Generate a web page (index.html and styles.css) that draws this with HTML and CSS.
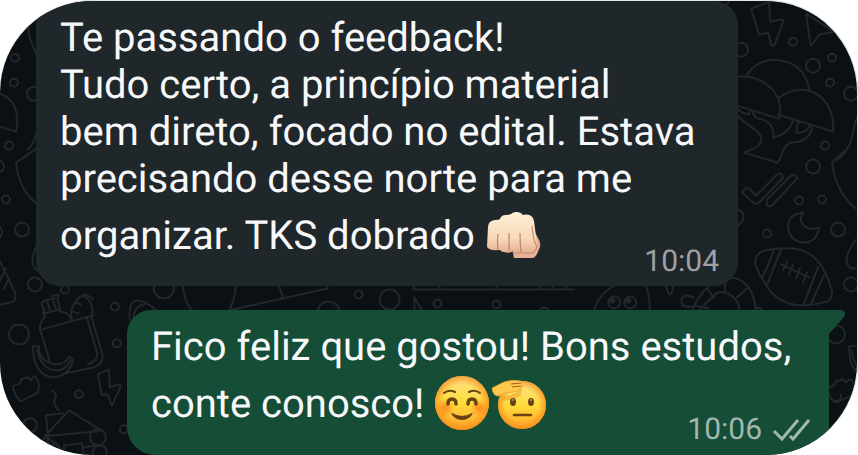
FILE: index.html
```html
<!DOCTYPE html>
<html lang="pt-BR">
<head>
<meta charset="utf-8">
<meta name="viewport" content="width=device-width, initial-scale=1">
<title>Conversa</title>
<link rel="stylesheet" href="styles.css">
</head>
<body>
<main class="chat">
  <svg class="wallpaper" viewBox="0 0 858 455" preserveAspectRatio="xMidYMid slice" aria-hidden="true">
    <!-- small bubbles -->
    <circle cx="15" cy="57" r="4"/><circle cx="14" cy="82" r="4"/><circle cx="34" cy="93" r="7"/><circle cx="9" cy="145" r="4"/>
    <circle cx="-2" cy="166" r="6"/><circle cx="6" cy="199" r="4"/><circle cx="22" cy="229" r="7"/><circle cx="35" cy="284" r="7"/>
    <circle cx="65" cy="289" r="4"/><circle cx="19" cy="334" r="10"/><circle cx="115" cy="306" r="4"/><circle cx="117" cy="343" r="4"/>
    <circle cx="79" cy="394" r="4"/><circle cx="30" cy="425" r="7"/><circle cx="124" cy="429" r="4"/><circle cx="164" cy="288" r="10"/>
    <circle cx="359" cy="294" r="4"/><circle cx="390" cy="299" r="10"/><circle cx="438" cy="303" r="4"/><circle cx="497" cy="304" r="4"/>
    <circle cx="545" cy="311" r="4"/><circle cx="329" cy="312" r="11"/><circle cx="742" cy="49" r="7"/><circle cx="794" cy="41" r="4"/>
    <circle cx="814" cy="65" r="7"/><circle cx="833" cy="57" r="4"/><circle cx="831" cy="82" r="4"/><circle cx="852" cy="93" r="7"/>
    <circle cx="826" cy="145" r="4"/><circle cx="814" cy="166" r="7"/><circle cx="800" cy="200" r="4"/><circle cx="823" cy="199" r="4"/>
    <circle cx="839" cy="229" r="7"/><circle cx="768" cy="233" r="4"/><circle cx="852" cy="284" r="7"/><circle cx="837" cy="334" r="9"/>
    <!-- left edge shapes -->
    <path d="M29 24C27 36 33 43 37 56M0 93C14 98 20 112 16 131L0 126M37 132Q34 142 28 149M38 147L16 162C18 182 27 196 38 204M37 245Q28 263 37 270M0 227Q4 231 0 237M0 261L15 292Q17 300 11 302L0 304M0 280L6 268M4 288L9 278"/>
    <!-- groceries and banana -->
    <path d="M42 304l3 9 15-4-2-9q-1-3-4-2l-9 2q-4 1-3 4M47 300l3 10M53 299l3 10M43 312l2 4q-6 7-5 13l10 32M59 309l1 2q8 0 12 9M42 329l51-14q-1-16-8-19-7-1-12 10-3 7-1 14M75 302l6 2M72 311l7 2M87 317l10 35q2 8-9 12M91 315l11 37q3 11-8 15L62 374"/>
    <path d="M33 346l6 0 0 5q5 13 18 13 8 0 12-7 3-1 4 3-4 17-22 17-18-4-18-31M37 349q4 19 18 21 10 1 16-10"/>
    <!-- briefcase, steam, lightning -->
    <path d="M13 386l7-3 1-4 7-2 3 3 3-4q3 0 5 9l-1 7-17 9q-4-2-8-13M52 390q6 5 3 9t4 11M98 374l11-5 1 18 9-3q4 1-3 12l-3 8q-2 3-3-5l-3-5-5 1z"/>
    <!-- small house on wheels -->
    <path d="M45 436l24-26 32 20-3 1-53 5 3-1-2-20 17-2M48 437v18M64 455v-10l18-2 2 12M84 447l14-2M55 442l7 8"/>
    <circle cx="98" cy="437" r="8"/><circle cx="46" cy="446" r="8"/><circle cx="100" cy="452" r="7"/>
    <!-- strip between messages -->
    <path d="M52 296l6-2q2 1 0 3M77 299q8-9 16 0M183 286q3 22 14 28h30q8-12 9-28M229 310l99-22v-4M279 284l4 13M130 320q-2-20 8-20 9 0 19 11M133 324q0-20 12-20M414 286v3h161M415 309v-12l9 16M440 286v3M497 286v3M540 286v3M553 286v3M567 286v3M594 312q6-20 23-28M647 286q5 14 3 28M667 286q4 16 7 0"/>
    <circle cx="615" cy="302" r="6"/><circle cx="631" cy="302" r="6"/><circle class="dot" cx="613" cy="300" r="3"/><circle class="dot" cx="629" cy="300" r="3"/>
    <!-- turtle -->
    <path d="M694 297q-10-5-12 3 0 8 10 6M692 312q14-34 40-35 22 2 25 34M698 312q10-11 20-20 16-2 22 14l-1 7M695 305l14 3M708 288l7 10M726 280v12M738 297l11-10M756 308q6-2 8 3"/>
    <!-- lightning -->
    <path d="M770 1l-18 7 8 26 9-2 3 12q2 3 4-1l8-22q1-3-3-2l-10 2zM807 13l28 18-15 3-7 10q-2 2-2-3zM725 4q4 0 5-4"/>
    <!-- trees -->
    <path d="M748 74q10-15 28-15 29 2 34 29M738 76c28-2 48 18 42 42l-42-13M780 97c27-20 57 0 54 34l-55-17M738 107q3 5 12 7l1-5M754 111q0 7 10 8 12 5 10 18 17-4 20-18M799 121l-2 11q10 1 14-7M813 126q-2 16-22 16-6 3-10 16l-3 4-33-10 12-5q12-10-4-20-13-9-14-12M858 117c-5 10-2 30-20 42"/>
    <!-- double tick -->
    <path d="M744 191q2-5 6-3l7 7 21-21q5-3 6 3l-23 24q-4 4-7 1l-10-9q-1-1 0-2M768 199l24-24q6-2 6 3l-25 27q-7 3-5-6"/>
    <!-- heart, moon, football -->
    <path d="M846 150l-13 12c2 20 12 37 24 46M738 209q13 5 0 17M804 212q-16 2-15 16 3 14 17 14 12-1 14-15-12 4-17-4-3-5 1-11M857 239q-16 22-5 29h5"/>
    <path d="M757 257q3-7 15-8c28-4 42 2 52 19q6 11 9 23 0 8-5 10c-27 8-49 5-62-18q-7-10-10-20 0-3 1-6M775 250l-12 28M782 249l-14 35M819 267l-14 36M825 275l-13 28M782 264l28 13M788 261l-4 9M794 264l-4 10M801 268l-4 10M808 272l-4 10"/>
    <!-- lower right edge -->
    <path d="M829 388l6-3 2-4 7-2 3 3 4-3q4 2 5 9l-1 6-17 8q-5 0-9-10M850 346h7M850 346q0 18 7 25M853 350q0 7 4 14M832 399q10 5 10-5"/>
  </svg>

  <article class="message received">
    <p class="text">Te passando o feedback!<br>Tudo certo, a princípio material<br>bem direto, focado no edital. Estava<br>precisando desse norte para me<br>organizar. TKS dobrado
      <svg class="emoji" viewBox="0 0 56 56" role="img" aria-label="Punho cerrado">
        <defs>
          <linearGradient id="skin" x1="0" y1="0" x2="0" y2="1"><stop offset="0" stop-color="#fff0d8"/><stop offset=".65" stop-color="#f7d8b9"/><stop offset="1" stop-color="#e7ae91"/></linearGradient>
        </defs>
        <path d="M27 42l2 9h18q3 0 5-4l3-7q1-5-3-11l-4-7z" fill="#e6b095"/>
        <path d="M3 20q0-6 7-7 4 0 5-1 1-4 6-4 4 0 5-1 2-2 5-2 5 0 7 3 3-1 6 0 4 1 5 6l3 23q1 7-5 8H33q-4 0-5-1-3 3-9 1-3 0-4-2-13 1-13-4z" fill="url(#skin)"/>
        <path d="M13 27q-1 8 0 16M24 26v18M35 26q0 11 1 19" fill="none" stroke="#bd836c" stroke-width="1.2"/>
        <path d="M28 46h18q5 0 6-8M47 19q1 12 4 19" fill="none" stroke="#c88970" stroke-width="1.2"/>
      </svg></p>
    <footer class="meta"><time datetime="10:04">10:04</time></footer>
  </article>

  <article class="message sent">
    <svg class="tail" viewBox="0 0 17 24" aria-hidden="true"><path d="M0 0h13q5 2 2 7L0 24z"/></svg>
    <p class="text">Fico feliz que gostou! Bons estudos,<br>conte conosco!
      <svg class="emoji" viewBox="0 0 56 56" role="img" aria-label="Rosto sorridente">
        <defs>
          <linearGradient id="face" x1="0" y1="0" x2="0" y2="1"><stop offset="0" stop-color="#ffe28a"/><stop offset=".5" stop-color="#ffdc3c"/><stop offset="1" stop-color="#ffa52b"/></linearGradient>
          <radialGradient id="rim"><stop offset=".68" stop-color="#f58a18" stop-opacity="0"/><stop offset="1" stop-color="#f58a18" stop-opacity=".75"/></radialGradient>
          <radialGradient id="blush"><stop offset="0" stop-color="#ff7417" stop-opacity=".8"/><stop offset="1" stop-color="#ff8a17" stop-opacity="0"/></radialGradient>
        </defs>
        <circle cx="28" cy="28" r="27" fill="url(#face)"/><circle cx="28" cy="28" r="27" fill="url(#rim)"/>
        <circle cx="11" cy="33" r="10" fill="url(#blush)"/><circle cx="45" cy="33" r="10" fill="url(#blush)"/>
        <g fill="none" stroke="#684316" stroke-linecap="round"><path d="M10 18q5-4 11-1M35 17q6-3 11 1" stroke-width="2"/><path d="M14 29q0-5 4-5t4 5M34 29q0-5 4-5t4 5" stroke-width="3.5"/></g>
        <path d="M18 38q10 6 20 0 1 0 0 2-4 5-10 5t-10-5q-1-2 0-2" fill="#684316"/>
      </svg><svg class="emoji" viewBox="0 0 56 56" role="img" aria-label="Rosto em continência">
        <circle cx="32" cy="30" r="24" fill="url(#face)"/><circle cx="32" cy="30" r="24" fill="url(#rim)"/>
        <path d="M10 21q12 1 22-8l-1 8-10 4-10 1z" fill="#ee9a27" opacity=".5"/>
        <path d="M2 13l12-6q9-3 17-1 2 1 1 3 1 3-1 5-3 2-8 3l-8 1-7 3q-5 0-6-8z" fill="#ffc94e" stroke="#e99a2d" stroke-width=".7"/>
        <path d="M21 9l10-1M22 12l9-1" stroke="#a75819" stroke-width="1.2" fill="none"/>
        <ellipse cx="23" cy="27" rx="3" ry="4" fill="#684316"/><ellipse cx="41" cy="27" rx="3" ry="4" fill="#684316"/>
        <circle cx="23" cy="25" r="1" fill="#b69265"/><circle cx="41" cy="25" r="1" fill="#b69265"/>
        <path d="M24 40h17" stroke="#684316" stroke-width="2.5" stroke-linecap="round"/>
      </svg></p>
    <footer class="meta"><time datetime="10:06">10:06</time>
      <svg class="ticks" viewBox="0 0 38 26" role="img" aria-label="Entregue"><path d="M2 14l8 8L26 3M18 19l3 3L37 3"/></svg>
    </footer>
  </article>
</main>
</body>
</html>
```
FILE: styles.css
```css
* {
  box-sizing: border-box;
}

body {
  margin: 0;
  background: #fff;
  font-family: Roboto, "Liberation Sans", sans-serif;
  text-rendering: geometricPrecision;
}

.chat {
  position: relative;
  display: flex;
  flex-direction: column;
  gap: 24px;
  min-height: 100vh;
  padding: 0 28px 0 36px;
  overflow: hidden;
  border: solid #e1e7e6;
  border-width: 1px 1px 0 0;
  border-radius: 92px;
  background: #0b1014;
}

.wallpaper {
  position: absolute;
  inset: 0;
  width: 100%;
  height: 100%;
  fill: none;
  stroke: #22272b;
  stroke-width: 2;
  stroke-linecap: round;
  stroke-linejoin: round;
}

.wallpaper .dot {
  fill: #22272b;
  stroke: none;
}

.message {
  position: relative;
  padding: 13px 19px 9px 24px;
  border-radius: 24px;
}

.received {
  margin-right: 91px;
  background: #20272b;
}

.sent {
  flex: 1;
  margin-left: 91px;
  border-radius: 24px 0 0 28px;
  background: #154d37;
}

.tail {
  position: absolute;
  top: 0;
  left: 100%;
  width: 17px;
  height: 24px;
  fill: #154d37;
}

.text {
  margin: 0;
  color: #f7f8fa;
  font-size: 40px;
  line-height: 47px;
  white-space: nowrap;
}

.emoji {
  width: 56px;
  height: 56px;
  margin-top: 5px;
  vertical-align: -14px;
}

.meta {
  display: flex;
  justify-content: flex-end;
  align-items: center;
  gap: 10px;
  margin-top: -16px;
  color: #9da1a3;
  font-size: 30px;
  line-height: 30px;
}

.sent .meta {
  color: #a0b8ae;
}

.ticks {
  width: 38px;
  height: 26px;
  fill: none;
  stroke: currentColor;
  stroke-width: 3;
}
```
